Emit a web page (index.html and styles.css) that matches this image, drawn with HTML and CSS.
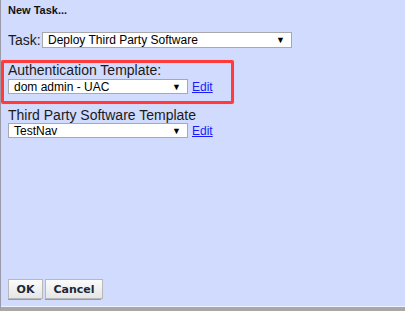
FILE: index.html
```html
<!DOCTYPE html>
<html lang="en">
  <head>
    <meta charset="UTF-8" />
    <title>New Task</title>
    <link rel="stylesheet" href="styles.css">
  </head>
  <body>
    <div class="dialog">
      <div class="dialog-title">New Task...</div>

      <div class="task-row">
        <span class="task-label">Task:</span>
        <div class="select-box task-select">
          <span>Deploy Third Party Software</span>
          <span class="arrow">&#9660;</span>
        </div>
      </div>

      <div class="field auth-field">
        <div class="field-label">Authentication Template:</div>
        <div class="field-row">
          <div class="select-box">
            <span>dom admin - UAC</span>
            <span class="arrow">&#9660;</span>
          </div>
          <a href="#" class="edit-link">Edit</a>
        </div>
      </div>

      <div class="field">
        <div class="field-label">Third Party Software Template</div>
        <div class="field-row">
          <div class="select-box">
            <span>TestNav</span>
            <span class="arrow">&#9660;</span>
          </div>
          <a href="#" class="edit-link">Edit</a>
        </div>
      </div>

      <div class="buttons">
        <button class="btn btn-ok">OK</button>
        <button class="btn btn-cancel">Cancel</button>
      </div>
    </div>
  </body>
</html>
```

FILE: styles.css
```css
* {
  margin: 0;
  padding: 0;
  box-sizing: border-box;
}

body {
  width: 405px;
  height: 311px;
  background-color: #d1dbfe;
  font-family: "Liberation Sans", Arial, sans-serif;
  color: #1a1a1a;
  overflow: hidden;
}

.dialog {
  height: 311px;
  display: flex;
  flex-direction: column;
  border-left: 1px solid #9a9aa8;
  border-bottom: 4px solid #a8a8a8;
  box-shadow: inset 0 -1px 0 #eef2ff;
}

.dialog-title {
  margin: 4px 0 0 7px;
  font-size: 11px;
  font-weight: bold;
  line-height: 13px;
  color: #111;
}

.task-row {
  display: flex;
  align-items: center;
  margin: 15px 0 0 7px;
}

.task-label {
  font-size: 14px;
  width: 34px;
}

.select-box {
  width: 180px;
  height: 15px;
  display: flex;
  align-items: center;
  justify-content: space-between;
  padding: 0 6px 0 5px;
  background-color: #fff;
  border: 1px solid #a9a9a9;
  font-size: 12px;
  color: #000;
}

.task-select {
  width: 250px;
  height: 16px;
}

.arrow {
  font-size: 9px;
  color: #000;
}

.field {
  margin: 0 0 0 7px;
}

.auth-field {
  width: 233px;
  margin: 12px 0 0 0;
  padding: 0 0 7px 4px;
  border: 3px solid #ff3b3b;
  border-radius: 2px;
  box-shadow: 0 0 1px #ff8080;
}

.auth-field .field-label {
  margin-bottom: 1px;
}

.field + .field {
  margin-top: 4px;
}

.field-label {
  font-size: 14px;
  line-height: 15px;
}

.field-row {
  display: flex;
  align-items: center;
  gap: 4px;
}

.edit-link {
  font-size: 12px;
  color: #1a1aff;
  text-decoration: underline;
}

.buttons {
  display: flex;
  gap: 2px;
  margin: auto 0 8px 7px;
}

.btn {
  height: 20px;
  font-family: "DejaVu Sans", Verdana, sans-serif;
  font-size: 11px;
  font-weight: bold;
  color: #1c2638;
  background: linear-gradient(#fbfbfb, #e6e6e6);
  border: 1px solid #b8b8b8;
  box-shadow: -1px 2px 0 -1px #9a9a9a;
  cursor: pointer;
}

.btn-ok {
  width: 35px;
}

.btn-cancel {
  width: 58px;
}
```
